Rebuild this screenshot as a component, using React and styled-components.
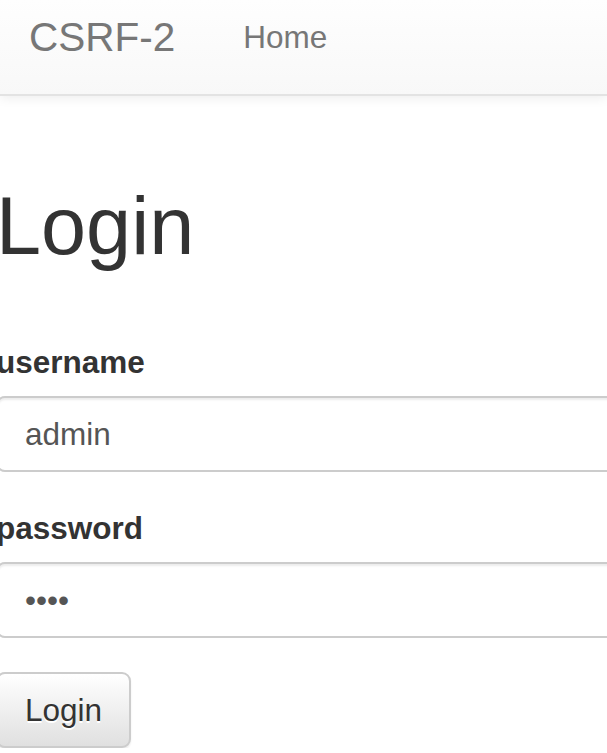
import styled, { createGlobalStyle } from 'styled-components';

const GlobalStyle = createGlobalStyle`
	html, body {
		margin: 0;
		padding: 0;
		background: #fff;
		overflow: hidden;
	}
	body {
		font-family: "Liberation Sans", Arial, Helvetica, sans-serif;
		color: #333;
	}
	* {
		box-sizing: border-box;
	}
`;

const Navbar = styled.nav`
	display: flex;
	align-items: flex-start;
	height: 96px;
	padding-top: 15px;
	background-image: linear-gradient(to bottom, #fefefe 0, #f8f8f8 100%);
	border-bottom: 2px solid #e3e3e3;
	box-shadow: inset 0 2px 0 rgba(255, 255, 255, 0.15), 0 2px 11px rgba(0, 0, 0, 0.075);
`;

const Brand = styled.a`
	display: block;
	margin-left: -5px;
	padding: 0 34px;
	font-size: 40.5px;
	line-height: 45px;
	color: #777;
	text-decoration: none;
`;

const NavLink = styled.a`
	display: block;
	padding: 0 34px;
	font-size: 31.5px;
	line-height: 45px;
	color: #777;
	text-decoration: none;
`;

const Container = styled.main`
	margin-left: -4px;
	width: 760px;
`;

const Heading = styled.h1`
	margin: 86px 0 69px;
	font-size: 81px;
	font-weight: 500;
	line-height: 89px;
	color: #333;
`;

const FormGroup = styled.div`
	margin-bottom: 34px;
`;

const Label = styled.label`
	display: block;
	margin-bottom: 11px;
	font-size: 31.5px;
	font-weight: 700;
	line-height: 45px;
	color: #333;
`;

const Input = styled.input`
	display: block;
	width: 100%;
	height: 76px;
	padding: 13px 27px;
	font-family: inherit;
	font-size: 31.5px;
	line-height: 45px;
	color: #555;
	background: #fff;
	border: 2px solid #ccc;
	border-radius: 9px;
	box-shadow: inset 0 2px 2px rgba(0, 0, 0, 0.075);
	outline: none;
`;

const Button = styled.button`
	display: inline-block;
	height: 76px;
	padding: 13px 27px;
	font-family: inherit;
	font-size: 31.5px;
	line-height: 45px;
	color: #333;
	text-shadow: 0 2px 0 #fff;
	background-image: linear-gradient(to bottom, #fff 0, #e0e0e0 100%);
	border: 2px solid #ccc;
	border-radius: 9px;
	box-shadow: inset 0 2px 0 rgba(255, 255, 255, 0.15), 0 2px 2px rgba(0, 0, 0, 0.075);
	cursor: pointer;
`;

export default function App() {
	return (
		<>
			<GlobalStyle />
			<Navbar>
				<Brand href="#">CSRF-2</Brand>
				<NavLink href="#">Home</NavLink>
			</Navbar>
			<Container>
				<Heading>Login</Heading>
				<form onSubmit={(e) => e.preventDefault()}>
					<FormGroup>
						<Label htmlFor="username">username</Label>
						<Input id="username" type="text" defaultValue="admin" />
					</FormGroup>
					<FormGroup>
						<Label htmlFor="password">password</Label>
						<Input id="password" type="password" defaultValue="1234" />
					</FormGroup>
					<Button type="submit">Login</Button>
				</form>
			</Container>
		</>
	);
}
